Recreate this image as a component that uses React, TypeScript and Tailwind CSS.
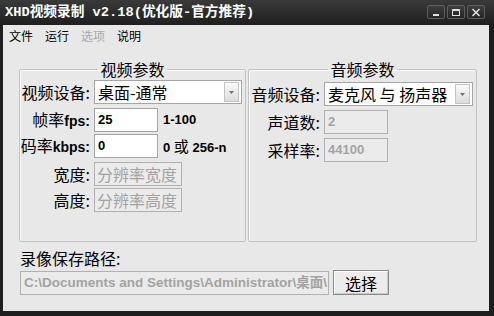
const cjk = "font-['Noto_Sans_CJK_SC',sans-serif]";
const latin = "font-['Liberation_Sans','Noto_Sans_CJK_SC',sans-serif]";

const menuItems = [
  { label: '文件', disabled: false },
  { label: '运行', disabled: false },
  { label: '选项', disabled: true },
  { label: '说明', disabled: false },
];

function WinButton({ kind }: { kind: 'min' | 'max' | 'close' }) {
  return (
    <div className="w-[18px] h-[14px] flex items-center justify-center rounded-[2px] border border-[#5e5e5e] bg-gradient-to-b from-[#3e3e3e] to-[#252525]">
      <svg width="10" height="9" viewBox="0 0 10 9">
        {kind === 'min' && <rect x="2" y="6" width="6" height="2" fill="#e0e0e0" />}
        {kind === 'max' && (
          <>
            <rect x="1.5" y="1.5" width="7" height="6" fill="none" stroke="#e0e0e0" strokeWidth="1" />
            <rect x="1" y="1" width="8" height="2" fill="#e0e0e0" />
          </>
        )}
        {kind === 'close' && (
          <path d="M1.5 1 L8.5 8 M8.5 1 L1.5 8" stroke="#e0e0e0" strokeWidth="1.6" />
        )}
      </svg>
    </div>
  );
}

function DropArrow() {
  return (
    <div className="w-[15px] h-[20px] mr-[2px] flex items-center justify-center border border-[#c4c4c4] bg-gradient-to-b from-[#fafafa] to-[#dcdcdc]">
      <svg width="5" height="3" viewBox="0 0 5 3">
        <path d="M0 0 H5 L2.5 3 Z" fill="#707070" />
      </svg>
    </div>
  );
}

function Combo({ value, width }: { value: string; width: string }) {
  return (
    <div className={`${width} shrink-0 h-[24px] flex items-center justify-between bg-white border border-[#a5a5a5]`}>
      <span className={`${cjk} text-[16px] leading-[18px] pl-[3px] text-black whitespace-pre`}>{value}</span>
      <DropArrow />
    </div>
  );
}

function Field({
  value,
  width,
  disabled,
  bold = true,
  size = 'text-[13px]',
}: {
  value: string;
  width: string;
  disabled?: boolean;
  bold?: boolean;
  size?: string;
}) {
  return (
    <div
      className={`${width} shrink-0 h-[24px] flex items-center overflow-hidden whitespace-nowrap border ${
        disabled ? 'bg-[#ebebeb] border-[#b0b0b0] text-[#a3a3a3]' : 'bg-white border-[#a5a5a5] text-black'
      }`}
    >
      <span
        className={
          bold
            ? `${latin} font-bold ${size} leading-[16px] pl-[3px]`
            : `${cjk} text-[16px] leading-[18px] pl-[2px]`
        }
      >
        {value}
      </span>
    </div>
  );
}

function Label({ text, unit, width }: { text: string; unit?: string; width: string }) {
  return (
    <span className={`${width} shrink-0 mr-[4px] text-right whitespace-nowrap ${cjk} text-[16px] leading-[18px] text-black`}>
      {text}
      {unit && <span className={`${latin} font-bold text-[14px]`}>{unit}</span>}
      {unit ? <span className={`${latin} font-bold text-[14px]`}>:</span> : ':'}
    </span>
  );
}

function Group({ title, width, children }: { title: string; width: string; children: React.ReactNode }) {
  return (
    <fieldset className={`${width} h-[181px] border border-[#c3c3c3] rounded-[2px] shadow-[inset_1px_1px_0_#f8f8f8]`}>
      <legend className={`mx-auto px-[2px] ${cjk} text-[16px] leading-[16px] text-black`}>{title}</legend>
      {children}
    </fieldset>
  );
}

export default function App() {
  return (
    <div className="w-[494px] h-[316px] flex flex-col bg-[#1e1e1e] select-none">
      {/* Title bar */}
      <div className="h-[25px] flex items-center justify-between bg-gradient-to-b from-[#3a3a3a] to-[#1f1f1f]">
        <span className="pl-[5px] font-['Liberation_Mono','Noto_Sans_CJK_SC',monospace] font-bold text-[13.7px] leading-[16px] text-white whitespace-pre">
          XHD视频录制 v2.18(优化版-官方推荐)
        </span>
        <div className="flex items-center gap-[2px] pr-[9px] pb-[1px]">
          <WinButton kind="min" />
          <WinButton kind="max" />
          <WinButton kind="close" />
        </div>
      </div>

      {/* Client area */}
      <div className="ml-[3px] mr-[5px] h-[286px] flex flex-col bg-[#e8e8e8]">
        <div className="h-[21px] flex items-center">
          {menuItems.map((m) => (
            <span
              key={m.label}
              className={`px-[6px] ${cjk} text-[12px] leading-[14px] ${m.disabled ? 'text-[#a8a8a8]' : 'text-black'}`}
            >
              {m.label}
            </span>
          ))}
        </div>

        <div className="flex gap-[2px] pl-[16px] mt-[15px]">
          <Group title="视频参数" width="w-[227px]">
            <div className="flex flex-col mt-[3px]">
              <div className="flex items-center">
                <Label text="视频设备" width="w-[70px]" />
                <Combo value="桌面-通常" width="w-[148px]" />
              </div>
              <div className="flex items-center mt-[4px]">
                <Label text="帧率" unit="fps" width="w-[70px]" />
                <Field value="25" width="w-[64px]" />
                <span className={`ml-[5px] ${latin} font-bold text-[13px] text-black`}>1-100</span>
              </div>
              <div className="flex items-center mt-[2px]">
                <Label text="码率" unit="kbps" width="w-[70px]" />
                <Field value="0" width="w-[64px]" />
                <span className={`ml-[5px] ${latin} font-bold text-[13px] text-black whitespace-pre`}>
                  0 <span className={`${cjk} font-normal text-[15px]`}>或</span> 256-n
                </span>
              </div>
              <div className="flex items-center mt-[4px]">
                <Label text="宽度" width="w-[70px]" />
                <Field value="分辨率宽度" width="w-[88px]" disabled bold={false} />
              </div>
              <div className="flex items-center mt-[2px]">
                <Label text="高度" width="w-[70px]" />
                <Field value="分辨率高度" width="w-[88px]" disabled bold={false} />
              </div>
            </div>
          </Group>

          <Group title="音频参数" width="w-[229px]">
            <div className="flex flex-col mt-[5px]">
              <div className="flex items-center">
                <Label text="音频设备" width="w-[71px]" />
                <Combo value="麦克风 与 扬声器" width="w-[149px]" />
              </div>
              <div className="flex items-center mt-[4px]">
                <Label text="声道数" width="w-[71px]" />
                <Field value="2" width="w-[64px]" disabled />
              </div>
              <div className="flex items-center mt-[4px]">
                <Label text="采样率" width="w-[71px]" />
                <Field value="44100" width="w-[64px]" disabled />
              </div>
            </div>
          </Group>
        </div>

        <div className="flex flex-col pl-[17px]">
          <span className={`mt-[7px] ${cjk} text-[16px] leading-[18px] text-black`}>录像保存路径:</span>
          <div className="flex items-center mt-[3px]">
            <Field
              value="C:\Documents and Settings\Administrator\桌面\"
              width="w-[309px]"
              size="text-[13.5px]"
              disabled
            />
            <button
              className={`ml-[4px] w-[56px] h-[25px] flex items-center justify-center ${cjk} text-[16px] leading-[18px] text-black bg-[#ececec] border border-[#8a8a8a] shadow-[inset_1px_1px_0_#ffffff,inset_-1px_-1px_0_#c8c8c8]`}
            >
              选择
            </button>
          </div>
        </div>
      </div>
    </div>
  );
}
